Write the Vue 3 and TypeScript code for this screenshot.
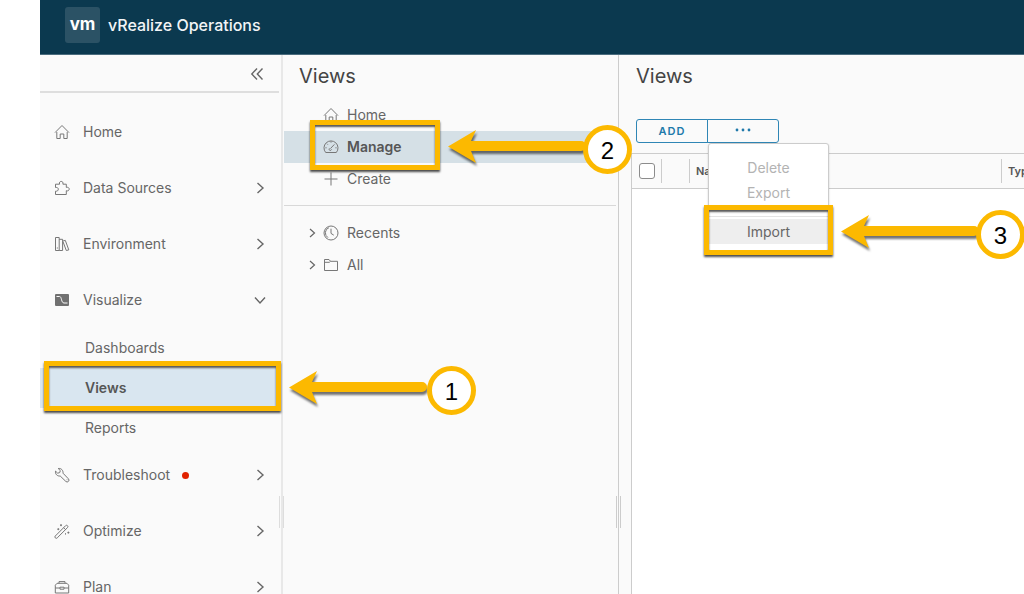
<script setup lang="ts">
import { defineComponent, h, ref } from 'vue'

interface NavItem {
  label: string
  icon: string
  state: 'none' | 'closed' | 'open'
  alert?: boolean
  children?: string[]
}

const navItems: NavItem[] = [
  { label: 'Home', icon: 'home', state: 'none' },
  { label: 'Data Sources', icon: 'puzzle', state: 'closed' },
  { label: 'Environment', icon: 'books', state: 'closed' },
  { label: 'Visualize', icon: 'chart', state: 'open', children: ['Dashboards', 'Views', 'Reports'] },
  { label: 'Troubleshoot', icon: 'wrench', state: 'closed', alert: true },
  { label: 'Optimize', icon: 'wand', state: 'closed' },
  { label: 'Plan', icon: 'case', state: 'closed' }
]

const panelItems = [
  { label: 'Home', icon: 'home' },
  { label: 'Manage', icon: 'gauge' },
  { label: 'Create', icon: 'plus' }
]

const treeItems = [
  { label: 'Recents', icon: 'clock' },
  { label: 'All', icon: 'folder' }
]

const allChecked = ref(false)

const paths: Record<string, string[]> = {
  home: ['M1 8.6 8 1.5l7 7.1', 'M2.8 8v6.5h3.4V10h3.6v4.5h3.4V8'],
  puzzle: ['M1.5 4.2H5.6C4.9 2.4 6 1.4 7.2 1.4S9.5 2.4 8.9 4.2H12.3V7.4C14 6.9 15.2 7.8 15.2 9.1S14 11.3 12.3 10.7V14.5H1.5V11.2C3.4 11.4 4.3 10.5 4.3 9.2S3.3 7.3 1.5 7.5Z'],
  books: ['M1.5 1.5H5.2V14.5H1.5Z', 'M5.2 3.3H8.6V14.5H5.2', 'M9 5 11.3 4.4 14.8 13.9 12.3 14.5 9 5.7', 'M2.8 12h1.1'],
  wrench: ['M6.2 9 11.8 14.4A1.7 1.7 0 0 0 14.4 11.8L9 6.2C9.4 3.4 7.2 1 4.2 1.5L6.3 3.6 5.7 5.6 3.7 6.2 1.5 4.1C1 7.2 3.4 9.4 6.2 9Z', 'M12.7 12.7h.6'],
  wand: ['M1.3 13 11.6 2.7A1.3 1.3 0 0 1 13.5 4.6L3.2 14.9A1.3 1.3 0 0 1 1.3 13Z', 'M9.6 4.7l1.9 1.9', 'M7 1.2v2M6 2.2h2M4.3 5.2v2M3.3 6.2h2M14.4 8.6v2M13.4 9.6h2M11.5 10.2v1.4'],
  case: ['M1.3 6.2 3 4.3H13L14.7 6.2V14H1.3Z', 'M5 4.3V2.6H11V4.3', 'M1.3 9H6M10 9h4.7M6 8.2h4v2H6Z'],
  gauge: ['M2.7 13.5A7 7 0 1 1 13.3 13.5Z', 'M7.4 9.6 11.4 5.4', 'M6.6 9.3a1.2 1.2 0 1 0 1.9.9', 'M8 2.4v1.2M2.4 8.8h1.2M12.4 8.8h1.2M4 4.8l.8.8'],
  plus: ['M8 1.5v13M1.5 8h13'],
  clock: ['M8 1a7 7 0 1 0 0 14A7 7 0 0 0 8 1Z', 'M8 3.7V8.4L10.8 10.2', 'M6 2.6a5.6 5.6 0 0 0-1 10'],
  folder: ['M1.5 13.5V2.5H6L7.5 4.3H14.5V13.5Z', 'M1.5 5.3H6.3L7.5 4.3']
}

const Glyph = defineComponent({
  props: { name: { type: String, required: true } },
  setup(props) {
    return () =>
      h(
        'svg',
        { viewBox: '0 0 16 16', width: 16, height: 16, fill: 'none', stroke: '#777', 'stroke-width': 1, 'aria-hidden': 'true' },
        props.name === 'chart'
          ? [
              h('rect', { x: 1, y: 2, width: 14, height: 12, rx: 1, fill: '#707070', stroke: 'none' }),
              h('path', { d: 'M2.5 4.5H5.5C8 4.5 7 11 10 11H13.5', stroke: '#fafafa' })
            ]
          : (paths[props.name] ?? []).map((d) => h('path', { d }))
      )
  }
})

const Callout = defineComponent({
  props: { step: { type: Number, required: true } },
  setup(props) {
    return () =>
      h('span', { class: 'callout' }, [
        h('svg', { class: 'callout-arrow', viewBox: '0 0 140 36', width: 140, height: 36, 'aria-hidden': 'true' }, [
          h('path', { d: 'M0 17.5 28 1 23 12H133A5 5 0 0 1 133 22H23L28 34Z', fill: '#fcb900' })
        ]),
        h('span', { class: 'callout-step' }, String(props.step))
      ])
  }
})
</script>

<template>
  <div class="page">
    <header class="topbar">
      <span class="logo">vm</span>
      <span class="product">vRealize Operations</span>
    </header>

    <div class="workspace">
      <nav class="sidenav" aria-label="Main">
        <div class="collapse-row">
          <button class="collapse" type="button" aria-label="Collapse navigation">
            <svg viewBox="0 0 14 14" width="14" height="14"><path d="M7 1.5 1.8 7 7 12.5M12.5 1.5 7.3 7l5.2 5.5" /></svg>
          </button>
        </div>
        <ul class="nav-list">
          <li v-for="item in navItems" :key="item.label">
            <a class="nav-link" href="#">
              <Glyph :name="item.icon" />
              <span>{{ item.label }}</span>
              <i v-if="item.alert" class="alert-dot"></i>
              <svg v-if="item.state !== 'none'" class="caret" :class="{ open: item.state === 'open' }" viewBox="0 0 12 12" width="12" height="12">
                <path d="M3.5 1 9 6 3.5 11" />
              </svg>
            </a>
            <ul v-if="item.children" class="sub-list">
              <li v-for="child in item.children" :key="child">
                <a class="sub-link" :class="{ active: child === 'Views' }" href="#">
                  {{ child }}
                  <Callout v-if="child === 'Views'" :step="1" />
                </a>
              </li>
            </ul>
          </li>
        </ul>
      </nav>

      <div class="splitter wide"><i class="grip"></i></div>

      <aside class="panel">
        <h2 class="title">Views</h2>
        <ul class="panel-list">
          <li v-for="item in panelItems" :key="item.label">
            <a class="panel-link" :class="{ active: item.label === 'Manage' }" href="#">
              <Glyph :name="item.icon" />
              <span>{{ item.label }}</span>
              <Callout v-if="item.label === 'Manage'" :step="2" />
            </a>
          </li>
        </ul>
        <ul class="tree-list">
          <li v-for="item in treeItems" :key="item.label">
            <a class="tree-link" href="#">
              <svg class="twist" viewBox="0 0 10 10" width="10" height="10"><path d="M3 1 7.5 5 3 9" /></svg>
              <Glyph :name="item.icon" />
              <span>{{ item.label }}</span>
            </a>
          </li>
        </ul>
      </aside>

      <div class="splitter"><i class="grip"></i></div>

      <main class="content">
        <h1 class="title">Views</h1>
        <div class="toolbar">
          <button class="tool" type="button">ADD</button>
          <div class="menu-anchor">
            <button class="tool more" type="button" aria-label="More actions">
              <svg viewBox="0 0 16 4" width="16" height="4"><circle cx="2" cy="2" r="1.4" /><circle cx="8" cy="2" r="1.4" /><circle cx="14" cy="2" r="1.4" /></svg>
            </button>
            <div class="menu">
              <button class="menu-item" type="button" disabled>Delete</button>
              <button class="menu-item" type="button" disabled>Export</button>
              <hr />
              <button class="menu-item hover" type="button">Import<Callout :step="3" /></button>
            </div>
          </div>
        </div>
        <div class="grid">
          <table>
            <thead>
              <tr>
                <th class="col-check"><input v-model="allChecked" type="checkbox" aria-label="Select all" /></th>
                <th class="col-mark"><div class="cell"></div></th>
                <th><div class="cell">Name</div></th>
                <th class="col-type"><div class="cell">Type</div></th>
              </tr>
            </thead>
          </table>
        </div>
      </main>
    </div>
  </div>
</template>

<style>
html,
body {
  margin: 0;
  overflow: hidden;
  background: #fff;
}

.callout {
  --reach: 148px;
  position: absolute;
  z-index: 10;
  box-sizing: border-box;
  height: 50px;
  border: 5px solid #fcb900;
  box-shadow: 0 2px 2px rgba(0, 0, 0, 0.7), inset 0 2px 2px rgba(0, 0, 0, 0.65);
  pointer-events: none;
}

.callout-arrow {
  position: absolute;
  left: calc(100% + 13px);
  top: 4px;
  overflow: visible;
  filter: drop-shadow(1px 3px 1px rgba(0, 0, 0, 0.55));
}

.callout-step {
  position: absolute;
  left: calc(100% + var(--reach));
  top: 0;
  box-sizing: border-box;
  width: 49px;
  height: 49px;
  border: 5px solid #fcb900;
  border-radius: 50%;
  background: #fff;
  color: #000;
  font: 400 24px/41px 'Liberation Sans', Arial, sans-serif;
  text-align: center;
}
</style>

<style scoped>
.page {
  display: flex;
  flex-direction: column;
  height: 100vh;
  padding-left: 40px;
  overflow: hidden;
  box-sizing: border-box;
  color: #666;
  font: 400 14px/20px Inter, 'Open Sans', sans-serif;
}

ul {
  list-style: none;
  margin: 0;
  padding: 0;
}

a {
  color: inherit;
  text-decoration: none;
}

button {
  font: inherit;
  cursor: pointer;
}

.topbar {
  flex: none;
  display: flex;
  align-items: center;
  gap: 8px;
  height: 55px;
  padding: 0 25px 5px;
  box-sizing: border-box;
  background: #0b394f;
  border-bottom: 1px solid #4a6c7e;
  color: #f2f5f7;
  font-size: 16px;
}

.logo {
  width: 35px;
  height: 36px;
  border-radius: 3px;
  background: #2b5265;
  color: #fff;
  font: 700 17px/34px Inter, sans-serif;
  text-align: center;
}

.product {
  font-weight: 500;
}

.workspace {
  flex: 1;
  display: flex;
  min-height: 0;
  background: #fafafa;
}

.sidenav {
  flex: none;
  width: 239px;
}

.collapse-row {
  display: flex;
  justify-content: flex-end;
  height: 38px;
  padding: 0 15px;
  box-sizing: border-box;
  border-bottom: 2px solid #dedede;
}

.collapse {
  display: flex;
  align-items: center;
  padding: 2px 0 0;
  border: 0;
  background: none;
}

.collapse path,
.caret path,
.twist path {
  fill: none;
  stroke: #666;
  stroke-width: 1.4;
}

.twist path {
  stroke-width: 1.2;
}

.nav-list {
  padding-top: 11px;
}

.nav-link {
  display: flex;
  align-items: center;
  height: 56px;
  padding: 0 13px 0 14px;
}

.nav-link > span {
  margin-left: 13px;
}

.alert-dot {
  width: 7px;
  height: 7px;
  margin-left: 12px;
  border-radius: 50%;
  background: #e12200;
}

.caret {
  margin-left: auto;
}

.caret.open {
  transform: rotate(90deg);
}

.sub-list {
  margin-bottom: -1px;
}

.sub-link {
  position: relative;
  display: flex;
  align-items: center;
  height: 40px;
  padding-left: 45px;
}

.sub-link.active {
  background: #d9e6f0;
  color: #565656;
  font-weight: 600;
}

.sub-link .callout {
  --reach: 151px;
  left: 4px;
  right: -2px;
  top: -7px;
}

.splitter {
  flex: none;
  width: 5px;
  background: linear-gradient(#ccc, #ccc) center / 1px 100% no-repeat;
}

.splitter.wide {
  background: linear-gradient(#e8e8e8, #e8e8e8) center / 2px 100% no-repeat;
}

.grip {
  display: block;
  height: 32px;
  margin-top: 441px;
  border: solid #ccc;
  border-width: 0 1px;
}

.wide .grip {
  border-color: #ddd;
}

.panel {
  flex: none;
  width: 332px;
}

.title {
  margin: 0;
  padding: 9px 15px 0;
  color: #444;
  font-size: 20px;
  font-weight: 400;
  line-height: 24px;
}

.panel-list {
  padding: 11px 0 10px;
  border-bottom: 1px solid #d8d8d8;
}

.panel-link,
.tree-link {
  position: relative;
  display: flex;
  align-items: center;
  gap: 8px;
  height: 32px;
}

.panel-link {
  padding-left: 39px;
}

.panel-link.active {
  background: #d5e0e6;
  color: #565656;
  font-weight: 600;
}

.panel-link .callout {
  left: 26px;
  top: -11px;
  width: 130px;
}

.tree-list {
  padding-top: 11px;
}

.tree-link {
  padding-left: 23px;
}

.tree-link .twist {
  margin-right: -2px;
}

.content {
  flex: 1;
  display: flex;
  flex-direction: column;
  min-width: 0;
}

.toolbar {
  display: flex;
  margin: 31px 15px 10px;
}

.tool {
  display: flex;
  align-items: center;
  justify-content: center;
  width: 72px;
  height: 24px;
  padding: 0;
  border: 1px solid #2f86b5;
  border-radius: 3px 0 0 3px;
  background: transparent;
  color: #2079aa;
  font-size: 11px;
  font-weight: 600;
  letter-spacing: 1px;
}

.tool.more {
  border-radius: 0 3px 3px 0;
  padding-bottom: 3px;
}

.tool circle {
  fill: #2079aa;
}

.menu-anchor {
  position: relative;
  margin-left: -1px;
}

.menu {
  position: absolute;
  z-index: 5;
  left: 1px;
  top: 24px;
  box-sizing: border-box;
  width: 121px;
  padding: 11px 0 7px;
  border: 1px solid #ccc;
  border-radius: 3px;
  background: #fff;
  box-shadow: 0 1px 2px rgba(0, 0, 0, 0.2);
}

.menu hr {
  height: 1px;
  margin: 11px 0 2px;
  border: 0;
  background: #e4e4e4;
}

.menu-item {
  position: relative;
  display: block;
  width: 100%;
  height: 25px;
  padding: 0;
  border: 0;
  background: none;
  color: #666;
  text-align: center;
}

.menu-item:disabled {
  color: #b3b3b3;
}

.menu-item.hover {
  background: #eee;
}

.menu-item .callout {
  left: -5px;
  right: -5px;
  top: -14px;
}

.grid {
  flex: 1;
  margin-left: 10px;
  border: solid #ccc;
  border-width: 1px 0 0 1px;
  background: #fff;
}

table {
  width: 100%;
  table-layout: fixed;
  border-collapse: collapse;
  background: #fafafa;
}

th {
  height: 34px;
  padding: 0;
  border-bottom: 1px solid #ccc;
  color: #565656;
  font-size: 11px;
  font-weight: 600;
  line-height: 24px;
  text-align: left;
}

.col-check {
  width: 29px;
}

.col-mark {
  width: 28px;
}

.col-type {
  width: 23px;
}

.cell {
  height: 24px;
  padding-left: 6px;
  border-left: 1px solid #ccc;
  overflow: hidden;
  white-space: nowrap;
}

input[type='checkbox'] {
  appearance: none;
  display: block;
  width: 16px;
  height: 16px;
  margin: 0 0 0 7px;
  border: 1px solid #8c8c8c;
  border-radius: 3px;
  background: #fff;
}
</style>
